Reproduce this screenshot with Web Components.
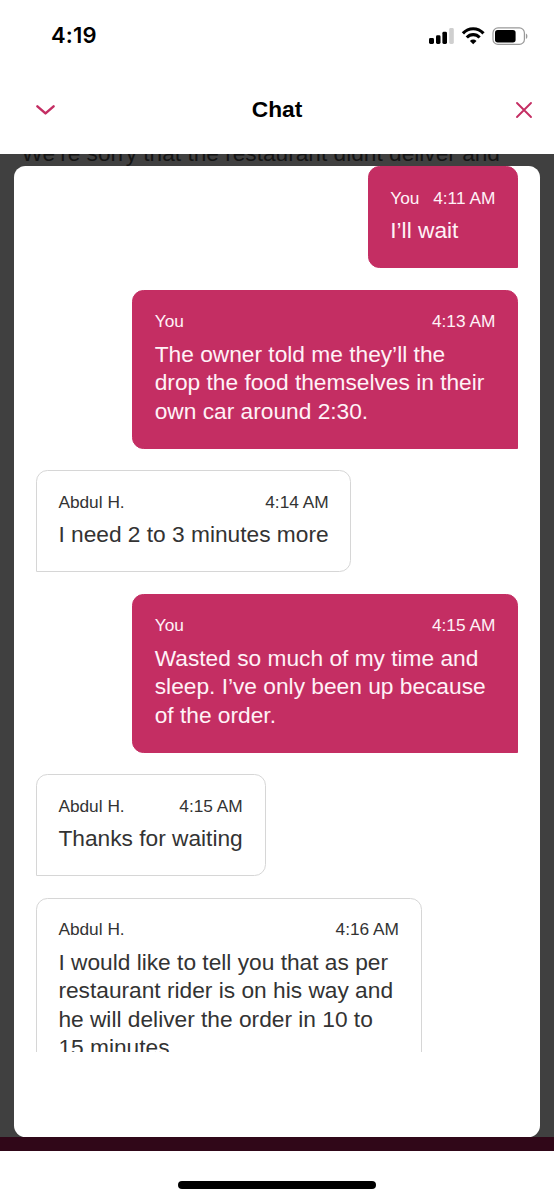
<!DOCTYPE html>
<html lang="en">
<head>
<meta charset="utf-8">
<title>Chat</title>
<style>
  html, body { margin: 0; height: 100%; background: #fff; }
  body { font-family: "Liberation Sans", Arial, sans-serif; overflow: hidden; }
</style>
</head>
<body>
<chat-app>
  <status-bar slot="top" time="4:19"></status-bar>
  <chat-header slot="top">Chat</chat-header>
  <span slot="notice">We’re sorry that the restaurant didnt deliver and</span>
  <chat-message own author="You" time="4:11 AM">I’ll wait</chat-message>
  <chat-message own author="You" time="4:13 AM">The owner told me they’ll the drop the food themselves in their own car around 2:30.</chat-message>
  <chat-message author="Abdul H." time="4:14 AM">I need 2 to 3 minutes more</chat-message>
  <chat-message own author="You" time="4:15 AM">Wasted so much of my time and sleep. I’ve only been up because of the order.</chat-message>
  <chat-message author="Abdul H." time="4:15 AM">Thanks for waiting</chat-message>
  <chat-message author="Abdul H." time="4:16 AM">I would like to tell you that as per restaurant rider is on his way and he will deliver the order in 10 to 15 minutes.</chat-message>
  <home-indicator slot="bottom"></home-indicator>
</chat-app>
<script>
class BaseElement extends HTMLElement {
  connectedCallback() {
    if (this.shadowRoot) return;
    this.attachShadow({ mode: 'open' }).innerHTML = this.render();
  }
}

customElements.define('status-bar', class extends BaseElement {
  render() {
    return `<style>
      :host { display: flex; height: 71px; box-sizing: border-box; align-items: center;
        justify-content: space-between; padding: 0 26px 0 51px; color: #000; }
      .time { font: 600 22px/26px Inter, sans-serif; letter-spacing: 0.2px; margin-bottom: 1.2px; }
      .icons { display: flex; align-items: center; }
      svg { display: block; }
    </style>
    <span class="time">${this.getAttribute('time')}</span>
    <span class="icons">
      <svg width="99" height="20" viewBox="0 0 99 20">
        <rect x="0" y="12" width="5" height="6" rx="1.4"/>
        <rect x="7" y="9.3" width="4.5" height="8.7" rx="1.4"/>
        <rect x="13.4" y="5.8" width="4.6" height="12.2" rx="1.4"/>
        <rect x="20.2" y="2" width="4.6" height="16" rx="1.4" fill="#cfcfcf"/>
        <g fill="none" stroke="#000" stroke-width="3.1">
          <path d="M33.9 7.4C39.7 1.2 48.7 1.2 54.5 7.4"/>
          <path d="M37.8 11.5C41.4 7.7 47 7.7 50.6 11.5"/>
        </g>
        <path d="M40.9 14.9c1.9-1.8 4.7-1.8 6.6 0L44.2 18.2z"/>
        <rect x="64" y="1.9" width="31.4" height="16.5" rx="5" fill="none" stroke="#999" stroke-width="1.2"/>
        <rect x="66" y="4" width="20.6" height="12.4" rx="2.7"/>
        <path d="M96.9 7.4c2 .7 2 4.8 0 5.5z" fill="#999"/>
      </svg>
    </span>`;
  }
});

customElements.define('chat-header', class extends BaseElement {
  render() {
    return `<style>
      :host { display: grid; grid-template-columns: 1fr auto 1fr; align-items: center; height: 82.5px;
        box-sizing: border-box; padding: 0 21px 5.4px 35px; }
      h1 { margin: 0; font-size: 22.73px; line-height: 28px; font-weight: 700; color: #000; transform: translate(-7px, -1px); }
      svg { display: block; fill: none; stroke: #c42e63; stroke-linecap: round; stroke-linejoin: round; }
      .close { justify-self: end; }
    </style>
    <svg width="21" height="14" viewBox="0 0 21 14" stroke-width="2.5"><path d="M2.4 3.4 10.5 10.4 18.6 3.4"/></svg>
    <h1><slot></slot></h1>
    <svg class="close" width="18" height="18" viewBox="0 0 18 18" stroke-width="1.9"><path d="M2 2 16 16M16 2 2 16"/></svg>`;
  }
});

customElements.define('chat-message', class extends BaseElement {
  render() {
    return `<style>
      :host { display: block; box-sizing: border-box; flex: none; align-self: flex-start; max-width: 386px;
        min-height: 102.3px; padding: 20.7px 21.8px 22.6px 21.6px; border: 1px solid #d6d6d6;
        border-radius: 11.4px 11.4px 11.4px 0; background: #fff; color: #333; }
      :host([own]) { align-self: flex-end; background: #c42e63; border-color: #c42e63;
        border-radius: 11.4px 11.4px 0 11.4px; color: #fff2f7; }
      header { display: flex; justify-content: space-between; gap: 13.8px;
        font-size: 17.3px; line-height: 21.3px; white-space: nowrap; }
      p { margin: 7.3px 0 0; font-size: 22.73px; line-height: 28.41px; }
    </style>
    <header><span>${this.getAttribute('author')}</span><time>${this.getAttribute('time')}</time></header>
    <p><slot></slot></p>`;
  }
});

customElements.define('home-indicator', class extends BaseElement {
  render() {
    return `<style>
      :host { display: flex; height: 49px; box-sizing: border-box; justify-content: center; padding-top: 30.2px; background: #fff; }
      i { width: 197.5px; height: 7.4px; border-radius: 4px; background: #000; }
    </style><i></i>`;
  }
});

customElements.define('chat-app', class extends BaseElement {
  render() {
    return `<style>
      :host { display: flex; flex-direction: column; height: 1200px; width: 554px; overflow: hidden; background: #fff; }
      .stage { flex: 1; min-height: 0; display: flex; flex-direction: column; overflow: hidden;
        background: linear-gradient(#404040, #404040) top / 100% calc(100% - 14px) no-repeat, #300718; }
      .notice { height: 12.5px; display: flex; align-items: flex-end; overflow: hidden; padding-left: 21.5px;
        font-size: 22.68px; line-height: 25px; color: #141414; white-space: nowrap; }
      .panel { flex: 1; min-height: 0; display: flex; flex-direction: column; margin: 0 14.2px 14px;
        background: #fff; border-radius: 11.4px; overflow: hidden; }
      .list { height: 886px; overflow: hidden; display: flex; flex-direction: column; gap: 21.3px; padding: 0 21.7px 0 21.6px; }
    </style>
    <slot name="top"></slot>
    <div class="stage">
      <div class="notice"><slot name="notice"></slot></div>
      <div class="panel"><div class="list"><slot></slot></div></div>
    </div>
    <slot name="bottom"></slot>`;
  }
});
</script>
</body>
</html>
